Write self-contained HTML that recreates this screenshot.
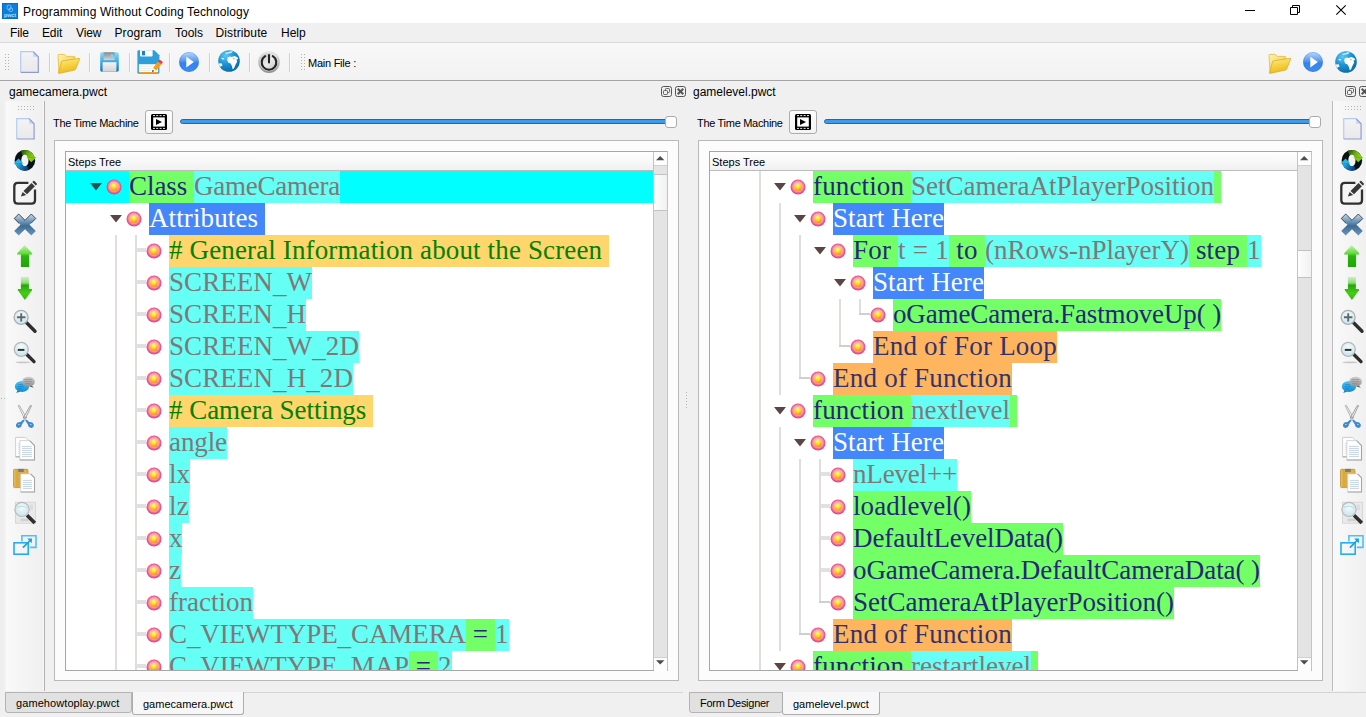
<!DOCTYPE html>
<html><head><meta charset="utf-8"><title>PWCT</title><style>
html,body{margin:0;padding:0}
body{width:1366px;height:717px;overflow:hidden;background:#f0f0f0;position:relative;font-family:"Liberation Sans",sans-serif;font-size:12px;color:#000}
.a{position:absolute}
.t{position:absolute;white-space:pre;line-height:16px;height:16px}
svg{position:absolute;overflow:visible}
.tree{position:absolute;background:#fff;overflow:hidden}
.row{position:absolute;left:0;height:32px;white-space:pre;font-family:"Liberation Serif",serif;font-size:27px;line-height:32px}
.row span{position:absolute;top:0;height:32px;display:block}
.row span i{font-style:normal;position:absolute;left:0;top:-1px;line-height:32px}
.row u{text-decoration:none;position:relative;top:1.5px}
.g{background:#73ff66;color:#27277a}
.c{background:#66fff5;color:#807878}
.b{background:#4487fa;color:#fff}
.y{background:#ffd66b;color:#008000}
.o{background:#ffb55e;color:#33336b}
.vl{position:absolute;width:2px;background:#e0dedb}
.hl{position:absolute;height:2px;background:#d2cfcb}
.hs{position:absolute;height:4px;background:#e2e1e0}
.dot{position:absolute;width:1px;height:1px;background:#b2b2b2}
</style></head><body>

<svg width="0" height="0" style="position:absolute">
<defs>
<radialGradient id="gBallO" cx="50%" cy="47%" r="52%"><stop offset="0" stop-color="#fbc0d2"/><stop offset="0.5" stop-color="#fab8cc"/><stop offset="0.68" stop-color="#f48aab"/><stop offset="0.85" stop-color="#ee5583"/><stop offset="1" stop-color="#eb4074"/></radialGradient>
<radialGradient id="gBallI" cx="45%" cy="30%" r="72%"><stop offset="0" stop-color="#fffbc0"/><stop offset="0.35" stop-color="#ffe040"/><stop offset="0.7" stop-color="#ffb818"/><stop offset="1" stop-color="#f28a00"/></radialGradient>
<symbol id="ball" viewBox="0 0 16 16"><circle cx="8" cy="8" r="7.5" fill="url(#gBallO)"/><circle cx="8" cy="7.9" r="3.9" fill="url(#gBallI)"/></symbol>

<linearGradient id="gDoc" x1="0" y1="0" x2="0" y2="1"><stop offset="0" stop-color="#f3f3f5"/><stop offset="1" stop-color="#e9e9ea"/></linearGradient>
<symbol id="doc" viewBox="0 0 19 22" overflow="visible"><path d="M0.7 0.7H13.2L18.3 5.8V21.3H0.7Z" fill="url(#gDoc)"/><path d="M13.2 0.7V5.8H18.3Z" fill="#c5d6f7"/><path d="M0.7 21.3V0.7H13.2" fill="none" stroke="#b5cbee" stroke-width="1.2"/><path d="M13.2 0.7L18.3 5.8V21.3H0.7" fill="none" stroke="#8f9ad4" stroke-width="1.2"/></symbol>

<linearGradient id="gFoB" x1="0" y1="0" x2="1" y2="1"><stop offset="0" stop-color="#fdf3a8"/><stop offset="1" stop-color="#f0c63a"/></linearGradient>
<linearGradient id="gFoF" x1="0" y1="0" x2="0.3" y2="1"><stop offset="0" stop-color="#fdeb9a"/><stop offset="0.5" stop-color="#f7d448"/><stop offset="1" stop-color="#ecbb1c"/></linearGradient>
<symbol id="folder" viewBox="0 0 23 20" overflow="visible"><path d="M1 1.2Q1 0.4 1.8 0.4H6.8Q7.6 0.4 8.2 1.1L9.4 2.4H17Q17.8 2.4 17.8 3.2V5.5L5 8L2 18.8Z" fill="url(#gFoB)" stroke="#e0b52c" stroke-width="0.7"/><path d="M4.6 7.6Q4.8 6.9 5.6 6.8L22.2 4.3Q23 4.2 22.7 5L18.6 15.2Q18.3 15.9 17.5 16.1L2.2 19.4Q1.3 19.5 1.5 18.7Z" fill="url(#gFoF)" stroke="#dba91a" stroke-width="0.7"/></symbol>

<linearGradient id="gSvB" x1="0" y1="0" x2="0" y2="1"><stop offset="0" stop-color="#8fdcf8"/><stop offset="0.45" stop-color="#45aee6"/><stop offset="1" stop-color="#1472bd"/></linearGradient>
<linearGradient id="gSvS" x1="0" y1="0" x2="0" y2="1"><stop offset="0" stop-color="#8a8a8a"/><stop offset="1" stop-color="#d6d6d6"/></linearGradient>
<linearGradient id="gSvL" x1="0" y1="0" x2="0" y2="1"><stop offset="0" stop-color="#f4f4f4"/><stop offset="1" stop-color="#d2d2d2"/></linearGradient>
<symbol id="save" viewBox="0 0 19 20" overflow="visible"><rect x="0.2" y="0.3" width="18.6" height="19.4" rx="1.6" fill="url(#gSvB)"/><rect x="3.6" y="0.3" width="11" height="7.8" fill="url(#gSvS)"/><rect x="10.8" y="2.2" width="2.2" height="4.6" fill="#7fd4f5"/><rect x="2.6" y="10.2" width="13.8" height="9.5" fill="url(#gSvL)"/></symbol>

<symbol id="saveas" viewBox="0 0 24 24" overflow="visible"><path d="M1.8 0.2H17.4L22.4 5.2V22.4Q22.4 23.8 21 23.8H1.8Q0.4 23.8 0.4 22.4V1.6Q0.4 0.2 1.8 0.2Z" fill="#2d9fda"/><path d="M3 0.2H15.6V5.2Q15.6 6.4 14.4 6.4H4.2Q3 6.4 3 5.2Z" fill="#fff"/><rect x="5" y="1" width="3" height="4.4" fill="#1c82bd"/><rect x="1.9" y="14.2" width="19.2" height="7.8" fill="#fff"/><path d="M3.5 16.2H16M3.5 18.4H15M3.5 20.4H14" stroke="#dedede" stroke-width="0.7"/><rect x="1.9" y="22" width="19.2" height="1.2" fill="#e9a225"/><path d="M15.3 21.8L16 18L20.8 11.6L24.2 14.2L19.4 20.6Z" fill="#ff9c14"/><path d="M15.3 21.8L16 18L19.4 20.6Z" fill="#fff"/><path d="M20.8 11.6L22 10Q22.5 9.4 23.2 9.9L25.4 11.6Q26 12.1 25.5 12.7L24.2 14.2Z" fill="#ee3a4c"/><path d="M15.2 21.9L15.6 19.9L17.2 21.1Z" fill="#111"/></symbol>

<linearGradient id="gPl" x1="0" y1="0" x2="0" y2="1"><stop offset="0" stop-color="#b9d7fb"/><stop offset="0.42" stop-color="#5c9df2"/><stop offset="0.55" stop-color="#3482ee"/><stop offset="1" stop-color="#3d8cf2"/></linearGradient>
<symbol id="play" viewBox="0 0 20 20" overflow="visible"><circle cx="10" cy="10" r="9.9" fill="url(#gPl)"/><circle cx="10" cy="10" r="9.6" fill="none" stroke="#2a6fd6" stroke-width="0.5" opacity="0.6"/><path d="M7.3 4.8V15.4L14.9 10.1Z" fill="#fff"/></symbol>

<radialGradient id="gGl" cx="35%" cy="25%" r="80%"><stop offset="0" stop-color="#5cc8f6"/><stop offset="0.5" stop-color="#1c94d4"/><stop offset="1" stop-color="#0a68a6"/></radialGradient>
<symbol id="globe" viewBox="0 0 22 22" overflow="visible"><circle cx="11" cy="11" r="10.8" fill="url(#gGl)"/><path d="M9.6 7.6L11.8 6.4L13.8 7L16.4 6L19.4 7.2L20.2 9L18.4 9.4L19.2 11.6L17.6 14.4L16.2 18L14.8 19.6L13.9 16L12.6 13.4L10.2 12.6L9.2 10Z" fill="#fff"/><path d="M14.6 8.4L16.6 8.2L16.2 9.4Z" fill="#2a9cd8"/><path d="M3.2 7.8L5.8 8.2L6.4 9.4L4 9.2Z" fill="#fff" opacity="0.9"/><path d="M7 2.8L10 2.2L12.5 1.2L15 1.6L13.5 3L10.5 3.4L8 4Z" fill="#e8f6fd" opacity="0.85"/><path d="M0.2 13.5L3.6 13.2L4.6 15.4L2 16.8Z" fill="#f5f5f5"/></symbol>

<linearGradient id="gPw" x1="0" y1="0" x2="0" y2="1"><stop offset="0" stop-color="#e9e9e9"/><stop offset="0.5" stop-color="#c4c4c4"/><stop offset="1" stop-color="#8e8e8e"/></linearGradient>
<linearGradient id="gPw2" x1="0" y1="0" x2="1" y2="1"><stop offset="0" stop-color="#bdbdbd"/><stop offset="0.5" stop-color="#ececec"/><stop offset="1" stop-color="#b5b5b5"/></linearGradient>
<symbol id="power" viewBox="0 0 22 22" overflow="visible"><circle cx="11" cy="11" r="10.9" fill="url(#gPw)"/><circle cx="11" cy="11" r="9.2" fill="url(#gPw2)"/><path d="M7.2 5.2A7.3 7.3 0 1 0 14.8 5.2" fill="none" stroke="#232323" stroke-width="2.1" stroke-linecap="round"/><path d="M11 4V11.4" stroke="#232323" stroke-width="2.1" stroke-linecap="round"/></symbol>

<!-- sidebar icons: 48x32 boxes -->
<symbol id="sdoc" viewBox="0 0 48 32" overflow="visible"><use href="#doc" x="16" y="5" width="18.8" height="21.7"/></symbol>

<linearGradient id="gRfG" gradientUnits="userSpaceOnUse" x1="19" y1="4" x2="34" y2="12"><stop offset="0" stop-color="#0d1a08"/><stop offset="0.25" stop-color="#2f6206"/><stop offset="0.6" stop-color="#68ae0c"/><stop offset="1" stop-color="#8cd216"/></linearGradient>
<linearGradient id="gRfB" gradientUnits="userSpaceOnUse" x1="31" y1="27" x2="16" y2="19"><stop offset="0" stop-color="#06142c"/><stop offset="0.25" stop-color="#093f78"/><stop offset="0.6" stop-color="#0e74b6"/><stop offset="1" stop-color="#2cb6e4"/></linearGradient>
<symbol id="refresh" viewBox="0 0 48 32" overflow="visible"><clipPath id="cpRf"><path clip-rule="evenodd" d="M14.6 15.4A10.3 10.3 0 1 0 35.2 15.4A10.3 10.3 0 1 0 14.6 15.4Z M21.3 15.4A3.6 6.2 0 1 1 28.5 15.4A3.6 6.2 0 1 1 21.3 15.4Z"/></clipPath><path fill-rule="evenodd" d="M14.6 15.4A10.3 10.3 0 1 0 35.2 15.4A10.3 10.3 0 1 0 14.6 15.4Z M21.3 15.4A3.6 6.2 0 1 1 28.5 15.4A3.6 6.2 0 1 1 21.3 15.4Z" fill="#0a1114"/><g clip-path="url(#cpRf)"><path d="M24.9 15.4L19 2H40V12.6H24.9Z" fill="url(#gRfG)"/><path d="M24.9 15.4L30.8 29H10V18.2H24.9Z" fill="url(#gRfB)"/></g><path d="M26.4 12.3H36.5L31.2 17.2Z" fill="#80c814"/><path d="M23.4 18.4H13.4L18.6 13.4Z" fill="#2bb4e4"/></symbol>

<symbol id="edit" viewBox="0 0 48 32" overflow="visible"><path d="M28.4 5.9H17.8Q14.3 5.9 14.3 9.4V23.2Q14.3 26.7 17.8 26.7H31.5Q35 26.7 35 23.2V12.6" fill="none" stroke="#303030" stroke-width="2.3"/><path d="M20.9 19.6L22.6 14.9L26.2 18.1Z" fill="#383838"/><path d="M23.5 13.9L31.5 5.9L34.9 9.2L27 17.2Z" fill="#383838"/><path d="M32.3 5.1L33.3 4.1Q33.8 3.6 34.4 4.1L36.8 6.5Q37.3 7 36.8 7.6L35.8 8.5Z" fill="#383838"/></symbol>

<linearGradient id="gX" x1="0" y1="0" x2="0" y2="1"><stop offset="0" stop-color="#c9dbe9"/><stop offset="0.3" stop-color="#7a9fbe"/><stop offset="0.55" stop-color="#3f6c92"/><stop offset="1" stop-color="#6a97bd"/></linearGradient>
<symbol id="xdel" viewBox="0 0 48 32" overflow="visible"><path d="M18.7 5L25 11.3L31.3 5L35.8 9.5L29.5 15.8L35.8 22.1L31.3 26.6L25 20.3L18.7 26.6L14.2 22.1L20.5 15.8L14.2 9.5Z" fill="url(#gX)"/><path d="M14.2 9.5L18.7 5L25 11.3L31.3 5L35.8 9.5L31 14.3" fill="none" stroke="#15222e" stroke-width="0.9" opacity="0.85"/><path d="M14.2 9.5L19 14.3" fill="none" stroke="#15222e" stroke-width="0.9" opacity="0.85"/></symbol>

<linearGradient id="gUp" x1="0" y1="0" x2="0" y2="1"><stop offset="0" stop-color="#c8f3b4"/><stop offset="0.38" stop-color="#62dc3a"/><stop offset="0.5" stop-color="#2cb410"/><stop offset="1" stop-color="#1fa507"/></linearGradient>
<symbol id="up" viewBox="0 0 48 32" overflow="visible"><path d="M24.7 4L32.2 12.2V13.6H29.1V26.1H20.9V13.6H17.2V12.2Z" fill="url(#gUp)"/></symbol>
<linearGradient id="gDn" x1="0" y1="0" x2="0" y2="1"><stop offset="0" stop-color="#c9efbd"/><stop offset="0.25" stop-color="#8fdc78"/><stop offset="0.36" stop-color="#27a60a"/><stop offset="0.7" stop-color="#44cc18"/><stop offset="1" stop-color="#35b80e"/></linearGradient>
<symbol id="down" viewBox="0 0 48 32" overflow="visible"><path d="M20.9 4.1H28.9V16H32V17.3L24.9 27L17.8 17.3V16H20.9Z" fill="url(#gDn)"/></symbol>

<radialGradient id="gLens" cx="50%" cy="35%" r="70%"><stop offset="0" stop-color="#f6fbfc"/><stop offset="1" stop-color="#c4e2e8"/></radialGradient>
<symbol id="zin" viewBox="0 0 48 32" overflow="visible"><path d="M26.6 17.8L35 26.2" stroke="#2e2e2e" stroke-width="3.4" stroke-linecap="round"/><circle cx="21.1" cy="12.3" r="7" fill="url(#gLens)" stroke="#a9adb0" stroke-width="1.3"/><path d="M17 12.3H25.4M21.2 8.2V16.5" stroke="#5d686e" stroke-width="1.9"/></symbol>
<symbol id="zout" viewBox="0 0 48 32" overflow="visible"><ellipse cx="23" cy="25.4" rx="7.4" ry="0.9" fill="#bdbdbd" opacity="0.8"/><path d="M26.4 17L34 24.6" stroke="#2e2e2e" stroke-width="3.4" stroke-linecap="round"/><circle cx="21.3" cy="12.3" r="7" fill="url(#gLens)" stroke="#b4b8bb" stroke-width="1.3"/><path d="M17.8 12.9H24.4" stroke="#2a3538" stroke-width="2"/></symbol>

<linearGradient id="gCmB" x1="0" y1="0" x2="0" y2="1"><stop offset="0" stop-color="#4cc4f5"/><stop offset="1" stop-color="#148ad2"/></linearGradient>
<linearGradient id="gCmG" x1="0" y1="0" x2="0" y2="1"><stop offset="0" stop-color="#cfcfcf"/><stop offset="1" stop-color="#8f8f8f"/></linearGradient>
<symbol id="comment" viewBox="0 0 48 32" overflow="visible"><path d="M17.8 21L16.2 24L20.5 22.4Z" fill="#1480c4"/><ellipse cx="22" cy="17.4" rx="7.1" ry="5.5" fill="url(#gCmB)"/><path d="M18.2 15.6H23M17.8 17.6H24M18.2 19.6H21.5" stroke="#0f7cc0" stroke-width="0.8" opacity="0.7"/><path d="M31.6 16.4L33.9 18.8L29.5 17.6Z" fill="#555"/><ellipse cx="28.5" cy="12.8" rx="6.3" ry="5" fill="url(#gCmG)"/><path d="M24.6 10.6H32M24.2 12.6H32.2M25 14.6H30.5" stroke="#858585" stroke-width="0.8" opacity="0.8"/></symbol>

<symbol id="scissors" viewBox="0 0 48 32" overflow="visible"><path d="M18.2 4.6L19.4 4.4L26.4 16.8L24.6 17.8Z" fill="#f4f4f4" stroke="#9a9a9a" stroke-width="0.7"/><path d="M31.6 4.6L30.4 4.4L23.4 16.8L25.2 17.8Z" fill="#f4f4f4" stroke="#8c8c8c" stroke-width="0.8"/><circle cx="24.9" cy="17" r="1.1" fill="#e8e8e8" stroke="#777" stroke-width="0.6"/><path d="M23.9 18.6Q21.8 19.4 20.6 21Q17.2 20.6 16.1 23.2Q15.4 26.2 18.4 26.9Q21.4 27 21.9 23.6Q23.2 21.2 24.6 19.4Z" fill="#3f8bcf"/><path d="M25.9 18.6Q28 19.4 29.2 21Q32.6 20.6 33.7 23.2Q34.4 26.2 31.4 26.9Q28.4 27 27.9 23.6Q26.6 21.2 25.2 19.4Z" fill="#3f8bcf"/><ellipse cx="18.9" cy="23.6" rx="0.7" ry="0.5" fill="#d6e6f6"/><ellipse cx="30.9" cy="23.6" rx="0.7" ry="0.5" fill="#d6e6f6"/></symbol>

<symbol id="copy" viewBox="0 0 48 32" overflow="visible"><path d="M15.6 4.4H25.6L29.4 8.2V23.6H15.6Z" fill="#fdfdfd" stroke="#c4c4c4" stroke-width="0.8"/><path d="M15.6 23.9H29.4" stroke="#a8a8a8" stroke-width="1"/><path d="M18 10.4H20M18 12.4H20M18 14.4H20M18 16.4H20M18 18.4H20M18 20.4H20" stroke="#cfd6e0" stroke-width="0.7"/><path d="M19.8 7.6H29.6L34.5 12.5V27H19.8Z" fill="#fff" stroke="#c9c9c9" stroke-width="0.8"/><path d="M29.6 7.6L34.5 12.5V27H19.8" fill="none" stroke="#a4a4a4" stroke-width="1.1"/><path d="M22 13.4H31.8M22 15.4H32M22 17.4H32M22 19.4H32M22 21.4H32M22 23.4H32" stroke="#b9c8dc" stroke-width="0.8"/></symbol>

<linearGradient id="gPs" x1="0" y1="0" x2="1" y2="0"><stop offset="0" stop-color="#e6c463"/><stop offset="0.2" stop-color="#d9a941"/><stop offset="1" stop-color="#e2b54c"/></linearGradient>
<symbol id="paste" viewBox="0 0 48 32" overflow="visible"><rect x="13.5" y="4.3" width="14.5" height="18.3" rx="1" fill="url(#gPs)" stroke="#b98a24" stroke-width="0.7"/><rect x="18.2" y="3.9" width="5.6" height="3" fill="#727a82"/><path d="M20.7 8.9H30.6L34.5 12.8V27H20.7Z" fill="#fff" stroke="#cdcdcd" stroke-width="0.7"/><path d="M30.6 8.9L34.5 12.8V27H20.7" fill="none" stroke="#a6a6a6" stroke-width="1.1"/><path d="M23 15.4H32M23 17.4H32M23 19.4H32M23 21.4H32M23 23.4H32" stroke="#b9c8dc" stroke-width="0.8"/></symbol>

<symbol id="find" viewBox="0 0 48 32" overflow="visible"><rect x="15.6" y="5.2" width="20" height="21" fill="#e9e9e9" stroke="#d2d2d2" stroke-width="0.8"/><rect x="20.5" y="21.6" width="8.5" height="2.6" fill="#d0d0d0"/><rect x="29.5" y="7.6" width="3.4" height="5.5" fill="#dcdcdc"/><path d="M27 18.2L34.8 26" stroke="#2e2e2e" stroke-width="3.6" stroke-linecap="butt"/><circle cx="22" cy="12.4" r="7.1" fill="url(#gLens)" stroke="#b6babd" stroke-width="1.2"/><path d="M16.5 10.6Q22 8 27.6 10.8" stroke="#bfe0ea" stroke-width="1.4" fill="none"/></symbol>

<symbol id="popup" viewBox="0 0 48 32" overflow="visible"><path d="M21.9 12.4V6.8H36V18.4H29.8" fill="none" stroke="#4fc0f6" stroke-width="1.6"/><rect x="14" y="13.8" width="14.2" height="11.4" fill="none" stroke="#24adf2" stroke-width="1.6"/><path d="M23.4 18.2L30.6 11" stroke="#12a2f0" stroke-width="1.7" stroke-linecap="round"/><path d="M27.2 9.6L32 9.4L31.8 14.2Z" fill="#12a2f0"/></symbol>

<symbol id="film" viewBox="0 0 16 16"><rect x="0" y="0" width="16" height="16" rx="1.5" fill="#000"/><rect x="2.2" y="3.4" width="11.6" height="9.2" fill="#fff"/><path d="M2 1.6H4M5.2 1.6H7.2M8.6 1.6H10.6M12 1.6H14M2 14.4H4M5.2 14.4H7.2M8.6 14.4H10.6M12 14.4H14" stroke="#fff" stroke-width="0.9"/><path d="M5 5V11L11 8Z" fill="#000"/></symbol>

<symbol id="appicon" viewBox="0 0 16 16"><rect x="0" y="0" width="16" height="16" fill="#0b7fdb"/><rect x="0.3" y="0.3" width="15.4" height="15.4" fill="none" stroke="#0565bd" stroke-width="0.6"/><rect x="5.2" y="2.2" width="3.6" height="4.2" rx="0.8" fill="none" stroke="#8fc8f4" stroke-width="0.7"/><rect x="7" y="5" width="3.6" height="3.4" rx="1.2" fill="none" stroke="#a9d5f7" stroke-width="0.7"/><text x="8" y="13.6" font-family="Liberation Sans, sans-serif" font-size="5.6" font-weight="bold" fill="#b9dcf8" text-anchor="middle" textLength="12" lengthAdjust="spacingAndGlyphs">pwct</text></symbol>
</defs>
</svg>

<div class="a" style="left:0;top:0;width:1366px;height:23px;background:#fff"></div>
<svg style="left:2px;top:3px" width="16" height="16"><use href="#appicon" width="16" height="16"/></svg>
<div class="t" style="left:23px;top:4px;font-size:12px;letter-spacing:0.13px">Programming Without Coding Technology</div>
<svg style="left:1240px;top:0" width="126" height="23"><path d="M5 10.5H15" stroke="#000" stroke-width="1"/><path d="M50.5 7.5H57.5V14.5H50.5Z M52.5 7.5V5.5H59.5V12.5H57.5" fill="none" stroke="#000" stroke-width="1"/><path d="M96.3 5.3L105.7 14.7M105.7 5.3L96.3 14.7" stroke="#000" stroke-width="1.1"/></svg>
<div class="a" style="left:0;top:23px;width:1366px;height:19px;background:#f0f0f0"></div>
<div class="a" style="left:0;top:42px;width:1366px;height:1px;background:#d9d9d9"></div>
<div class="t" style="left:10px;top:25px;font-size:12px;letter-spacing:-0.15px">File</div>
<div class="t" style="left:42px;top:25px;font-size:12px;letter-spacing:-0.15px">Edit</div>
<div class="t" style="left:76px;top:25px;font-size:12px;letter-spacing:-0.15px">View</div>
<div class="t" style="left:114.5px;top:25px;font-size:12px;letter-spacing:0.12px">Program</div>
<div class="t" style="left:175px;top:25px;font-size:12px;letter-spacing:0px">Tools</div>
<div class="t" style="left:215.5px;top:25px;font-size:12px;letter-spacing:0.12px">Distribute</div>
<div class="t" style="left:281px;top:25px;font-size:12px;letter-spacing:0px">Help</div>
<div class="a" style="left:0;top:43px;width:1366px;height:37px;background:linear-gradient(#f8f8f8,#f2f2f2)"></div>
<div class="a" style="left:0;top:80px;width:1366px;height:1px;background:#a5a5a5"></div>
<div class="a" style="left:49px;top:53px;width:1px;height:19px;background:#d0d0d0"></div><div class="a" style="left:50px;top:53px;width:1px;height:19px;background:#fbfbfb"></div>
<div class="a" style="left:89px;top:53px;width:1px;height:19px;background:#d0d0d0"></div><div class="a" style="left:90px;top:53px;width:1px;height:19px;background:#fbfbfb"></div>
<div class="a" style="left:129px;top:53px;width:1px;height:19px;background:#d0d0d0"></div><div class="a" style="left:130px;top:53px;width:1px;height:19px;background:#fbfbfb"></div>
<div class="a" style="left:169px;top:53px;width:1px;height:19px;background:#d0d0d0"></div><div class="a" style="left:170px;top:53px;width:1px;height:19px;background:#fbfbfb"></div>
<div class="a" style="left:209px;top:53px;width:1px;height:19px;background:#d0d0d0"></div><div class="a" style="left:210px;top:53px;width:1px;height:19px;background:#fbfbfb"></div>
<div class="a" style="left:249px;top:53px;width:1px;height:19px;background:#d0d0d0"></div><div class="a" style="left:250px;top:53px;width:1px;height:19px;background:#fbfbfb"></div>
<div class="a" style="left:289px;top:53px;width:1px;height:19px;background:#d0d0d0"></div><div class="a" style="left:290px;top:53px;width:1px;height:19px;background:#fbfbfb"></div>
<div class="dot" style="left:5px;top:54px"></div><div class="dot" style="left:5px;top:57px"></div><div class="dot" style="left:5px;top:60px"></div><div class="dot" style="left:5px;top:63px"></div><div class="dot" style="left:5px;top:66px"></div><div class="dot" style="left:5px;top:69px"></div><div class="dot" style="left:8px;top:54px"></div><div class="dot" style="left:8px;top:57px"></div><div class="dot" style="left:8px;top:60px"></div><div class="dot" style="left:8px;top:63px"></div><div class="dot" style="left:8px;top:66px"></div><div class="dot" style="left:8px;top:69px"></div>
<div class="dot" style="left:301px;top:54px"></div><div class="dot" style="left:301px;top:57px"></div><div class="dot" style="left:301px;top:60px"></div><div class="dot" style="left:301px;top:63px"></div><div class="dot" style="left:301px;top:66px"></div><div class="dot" style="left:301px;top:69px"></div><div class="dot" style="left:304px;top:54px"></div><div class="dot" style="left:304px;top:57px"></div><div class="dot" style="left:304px;top:60px"></div><div class="dot" style="left:304px;top:63px"></div><div class="dot" style="left:304px;top:66px"></div><div class="dot" style="left:304px;top:69px"></div>
<svg style="left:20px;top:51px" width="19" height="22"><use href="#doc" width="19" height="22"/></svg>
<svg style="left:57px;top:54px" width="23" height="20"><use href="#folder" width="23" height="20"/></svg>
<svg style="left:99.5px;top:52px" width="19" height="20"><use href="#save" width="19" height="20"/></svg>
<svg style="left:137px;top:50px" width="24" height="24"><use href="#saveas" width="24" height="24"/></svg>
<svg style="left:179.3px;top:52px" width="20" height="20"><use href="#play" width="20" height="20"/></svg>
<svg style="left:218px;top:50px" width="22" height="22"><use href="#globe" width="22" height="22"/></svg>
<svg style="left:258px;top:51px" width="22" height="22"><use href="#power" width="22" height="22"/></svg>
<div class="t" style="left:308px;top:55px;font-size:11px;letter-spacing:-0.25px">Main File :</div>
<svg style="left:1268.2px;top:54px" width="23" height="20"><use href="#folder" width="23" height="20"/></svg>
<svg style="left:1303px;top:52px" width="20" height="20"><use href="#play" width="20" height="20"/></svg>
<svg style="left:1335px;top:50.5px" width="22" height="22"><use href="#globe" width="22" height="22"/></svg>
<div class="t" style="left:9px;top:84px;font-size:12px">gamecamera.pwct</div>
<div class="t" style="left:53px;top:115px;font-size:11px;letter-spacing:-0.3px">The Time Machine</div>
<div class="a" style="left:145px;top:110px;width:26px;height:22px;border:1px solid #adadad;border-radius:3px;background:linear-gradient(#fdfdfd,#f3f3f3)"></div>
<svg style="left:151px;top:114px" width="16" height="16"><use href="#film" width="16" height="16"/></svg>
<div class="a" style="left:180px;top:119px;width:492px;height:3px;border:1px solid #2567a6;border-radius:3px;background:#3d9be9"></div>
<div class="a" style="left:665px;top:116px;width:10px;height:10px;border:1px solid #acacac;border-radius:3px;background:#fdfdfd"></div>
<div class="a" style="left:54px;top:140px;width:625px;height:541px;border:1px solid #b9b9b9;background:#fcfcfc;box-sizing:border-box"></div>
<div class="a" style="left:65px;top:151px;width:603px;height:520px;border:1px solid #a6a6a6;border-right-color:#c4c4c4;background:#fff;box-sizing:border-box"></div>
<div class="a" style="left:66px;top:152px;width:588px;height:18px;background:linear-gradient(#fff,#f1f1f1);border-bottom:1px solid #bcbcbc"></div>
<div class="t" style="left:68px;top:154px;font-size:11px">Steps Tree</div>
<div class="t" style="left:693px;top:84px;font-size:12px">gamelevel.pwct</div>
<div class="t" style="left:697px;top:115px;font-size:11px;letter-spacing:-0.3px">The Time Machine</div>
<div class="a" style="left:789px;top:110px;width:26px;height:22px;border:1px solid #adadad;border-radius:3px;background:linear-gradient(#fdfdfd,#f3f3f3)"></div>
<svg style="left:795px;top:114px" width="16" height="16"><use href="#film" width="16" height="16"/></svg>
<div class="a" style="left:824px;top:119px;width:492px;height:3px;border:1px solid #2567a6;border-radius:3px;background:#3d9be9"></div>
<div class="a" style="left:1309px;top:116px;width:10px;height:10px;border:1px solid #acacac;border-radius:3px;background:#fdfdfd"></div>
<div class="a" style="left:698px;top:140px;width:625px;height:541px;border:1px solid #b9b9b9;background:#fcfcfc;box-sizing:border-box"></div>
<div class="a" style="left:709px;top:151px;width:603px;height:520px;border:1px solid #a6a6a6;border-right-color:#c4c4c4;background:#fff;box-sizing:border-box"></div>
<div class="a" style="left:710px;top:152px;width:588px;height:18px;background:linear-gradient(#fff,#f1f1f1);border-bottom:1px solid #bcbcbc"></div>
<div class="t" style="left:712px;top:154px;font-size:11px">Steps Tree</div>
<svg style="left:661px;top:86px" width="26" height="11"><rect x="0.5" y="0.5" width="10" height="10" rx="2" fill="none" stroke="#555" stroke-width="1"/><rect x="4.5" y="2.5" width="4" height="4" rx="0.8" fill="none" stroke="#555" stroke-width="0.9"/><rect x="2.5" y="4.5" width="4" height="4" rx="0.8" fill="#f0f0f0" stroke="#555" stroke-width="0.9"/><rect x="14.5" y="0.5" width="10" height="10" rx="2" fill="none" stroke="#555" stroke-width="1"/><path d="M16.7 2.7L22.3 8.3M22.3 2.7L16.7 8.3" stroke="#555" stroke-width="2"/></svg>
<svg style="left:1345px;top:86px" width="26" height="11"><rect x="0.5" y="0.5" width="10" height="10" rx="2" fill="none" stroke="#555" stroke-width="1"/><rect x="4.5" y="2.5" width="4" height="4" rx="0.8" fill="none" stroke="#555" stroke-width="0.9"/><rect x="2.5" y="4.5" width="4" height="4" rx="0.8" fill="#f0f0f0" stroke="#555" stroke-width="0.9"/><rect x="14.5" y="0.5" width="10" height="10" rx="2" fill="none" stroke="#555" stroke-width="1"/><path d="M16.7 2.7L22.3 8.3M22.3 2.7L16.7 8.3" stroke="#555" stroke-width="2"/></svg>
<div class="a" style="left:653px;top:152px;width:13px;height:518px;background:#e4e4e4;border-left:1px solid #c4c4c4"></div>
<div class="a" style="left:654px;top:152px;width:13px;height:13px;background:#fdfdfd;border-bottom:1px solid #d0d0d0"></div>
<div class="a" style="left:654px;top:657px;width:13px;height:13px;background:#fdfdfd;border-top:1px solid #d0d0d0"></div>
<svg style="left:656.2px;top:156.2px" width="8.4" height="4.4"><path d="M0 4.2L4.2 0L8.4 4.2Z" fill="#4d4d4d"/></svg>
<svg style="left:656.2px;top:660.4px" width="8.4" height="4.4"><path d="M0 0.2L4.2 4.4L8.4 0.2Z" fill="#4d4d4d"/></svg>
<div class="a" style="left:654px;top:174px;width:13px;height:35px;background:linear-gradient(90deg,#fdfdfd,#f1f1f1);border-top:1px solid #c2c2c2;border-bottom:1px solid #c2c2c2"></div>
<div class="a" style="left:1297px;top:152px;width:13px;height:518px;background:#e4e4e4;border-left:1px solid #c4c4c4"></div>
<div class="a" style="left:1298px;top:152px;width:13px;height:13px;background:#fdfdfd;border-bottom:1px solid #d0d0d0"></div>
<div class="a" style="left:1298px;top:657px;width:13px;height:13px;background:#fdfdfd;border-top:1px solid #d0d0d0"></div>
<svg style="left:1300.2px;top:156.2px" width="8.4" height="4.4"><path d="M0 4.2L4.2 0L8.4 4.2Z" fill="#4d4d4d"/></svg>
<svg style="left:1300.2px;top:660.4px" width="8.4" height="4.4"><path d="M0 0.2L4.2 4.4L8.4 0.2Z" fill="#4d4d4d"/></svg>
<div class="a" style="left:1298px;top:250px;width:13px;height:26px;background:linear-gradient(90deg,#fdfdfd,#f1f1f1);border-top:1px solid #c2c2c2;border-bottom:1px solid #c2c2c2"></div>
<div class="a" style="left:0px;top:101px;width:44px;height:590px;background:linear-gradient(90deg,#eeeeee 0,#efefef 4px,#f9f9f9 6.5px,#f5f5f5 20px,#f0f0f0 42px,#f8f8f8 44px)"></div>
<div class="a" style="left:44px;top:101px;width:1px;height:590px;background:#b2b2b2"></div>
<div class="a" style="left:1333px;top:101px;width:33px;height:590px;background:linear-gradient(90deg,#f9f9f9,#f0f0f0)"></div>
<div class="a" style="left:1332px;top:101px;width:1px;height:590px;background:#bdbdbd"></div>
<div class="dot" style="left:18px;top:106px"></div><div class="dot" style="left:18px;top:109px"></div><div class="dot" style="left:21px;top:106px"></div><div class="dot" style="left:21px;top:109px"></div><div class="dot" style="left:24px;top:106px"></div><div class="dot" style="left:24px;top:109px"></div><div class="dot" style="left:27px;top:106px"></div><div class="dot" style="left:27px;top:109px"></div><div class="dot" style="left:30px;top:106px"></div><div class="dot" style="left:30px;top:109px"></div><div class="dot" style="left:33px;top:106px"></div><div class="dot" style="left:33px;top:109px"></div>
<svg style="left:0px;top:113px" width="48" height="32"><use href="#sdoc" width="48" height="32"/></svg>
<svg style="left:0px;top:145px" width="48" height="32"><use href="#refresh" width="48" height="32"/></svg>
<svg style="left:0px;top:177px" width="48" height="32"><use href="#edit" width="48" height="32"/></svg>
<svg style="left:0px;top:209px" width="48" height="32"><use href="#xdel" width="48" height="32"/></svg>
<svg style="left:0px;top:241px" width="48" height="32"><use href="#up" width="48" height="32"/></svg>
<svg style="left:0px;top:273px" width="48" height="32"><use href="#down" width="48" height="32"/></svg>
<svg style="left:0px;top:305px" width="48" height="32"><use href="#zin" width="48" height="32"/></svg>
<svg style="left:0px;top:337px" width="48" height="32"><use href="#zout" width="48" height="32"/></svg>
<svg style="left:0px;top:369px" width="48" height="32"><use href="#comment" width="48" height="32"/></svg>
<svg style="left:0px;top:401px" width="48" height="32"><use href="#scissors" width="48" height="32"/></svg>
<svg style="left:0px;top:433px" width="48" height="32"><use href="#copy" width="48" height="32"/></svg>
<svg style="left:0px;top:465px" width="48" height="32"><use href="#paste" width="48" height="32"/></svg>
<svg style="left:0px;top:497px" width="48" height="32"><use href="#find" width="48" height="32"/></svg>
<svg style="left:0px;top:529px" width="48" height="32"><use href="#popup" width="48" height="32"/></svg>
<div class="dot" style="left:1345px;top:106px"></div><div class="dot" style="left:1345px;top:109px"></div><div class="dot" style="left:1348px;top:106px"></div><div class="dot" style="left:1348px;top:109px"></div><div class="dot" style="left:1351px;top:106px"></div><div class="dot" style="left:1351px;top:109px"></div><div class="dot" style="left:1354px;top:106px"></div><div class="dot" style="left:1354px;top:109px"></div><div class="dot" style="left:1357px;top:106px"></div><div class="dot" style="left:1357px;top:109px"></div><div class="dot" style="left:1360px;top:106px"></div><div class="dot" style="left:1360px;top:109px"></div>
<svg style="left:1327px;top:113px" width="48" height="32"><use href="#sdoc" width="48" height="32"/></svg>
<svg style="left:1327px;top:145px" width="48" height="32"><use href="#refresh" width="48" height="32"/></svg>
<svg style="left:1327px;top:177px" width="48" height="32"><use href="#edit" width="48" height="32"/></svg>
<svg style="left:1327px;top:209px" width="48" height="32"><use href="#xdel" width="48" height="32"/></svg>
<svg style="left:1327px;top:241px" width="48" height="32"><use href="#up" width="48" height="32"/></svg>
<svg style="left:1327px;top:273px" width="48" height="32"><use href="#down" width="48" height="32"/></svg>
<svg style="left:1327px;top:305px" width="48" height="32"><use href="#zin" width="48" height="32"/></svg>
<svg style="left:1327px;top:337px" width="48" height="32"><use href="#zout" width="48" height="32"/></svg>
<svg style="left:1327px;top:369px" width="48" height="32"><use href="#comment" width="48" height="32"/></svg>
<svg style="left:1327px;top:401px" width="48" height="32"><use href="#scissors" width="48" height="32"/></svg>
<svg style="left:1327px;top:433px" width="48" height="32"><use href="#copy" width="48" height="32"/></svg>
<svg style="left:1327px;top:465px" width="48" height="32"><use href="#paste" width="48" height="32"/></svg>
<svg style="left:1327px;top:497px" width="48" height="32"><use href="#find" width="48" height="32"/></svg>
<svg style="left:1327px;top:529px" width="48" height="32"><use href="#popup" width="48" height="32"/></svg>
<div class="dot" style="left:686px;top:392px"></div><div class="dot" style="left:686px;top:395px"></div><div class="dot" style="left:686px;top:398px"></div><div class="dot" style="left:686px;top:401px"></div><div class="dot" style="left:686px;top:404px"></div><div class="dot" style="left:686px;top:407px"></div>
<div class="dot" style="left:1px;top:398px"></div><div class="dot" style="left:4px;top:398px"></div>
<div class="tree" style="left:66px;top:171px;width:587px;height:499px"><div class="a" style="left:0;top:0px;width:588px;height:32px;background:#00ffff"></div><svg style="left:24px;top:12px" width="12" height="8" viewBox="0 0 12 8"><path d="M0 0H12L6 7.6Z" fill="#2c5050"/></svg><svg style="left:40px;top:7.9px" width="16" height="16"><use href="#ball" width="16" height="16"/></svg><div class="row" style="top:0px"><span class="g" style="left:63px;width:65px"><i style="letter-spacing:-0.042px">Class </i></span><span class="c" style="left:128px;width:146px"><i style="letter-spacing:-0.242px">GameCamera</i></span></div><svg style="left:44px;top:44px" width="12" height="8" viewBox="0 0 12 8"><path d="M0 0H12L6 7.6Z" fill="#5b4545"/></svg><svg style="left:60px;top:39.9px" width="16" height="16"><use href="#ball" width="16" height="16"/></svg><div class="row" style="top:32px"><span class="b" style="left:83px;width:116px"><i style="letter-spacing:0.116px">Attributes </i></span></div><div class="vl" style="left:49px;top:64px;height:32px"></div><div class="vl" style="left:69px;top:64px;height:32px"></div><div class="hs" style="left:71px;top:77px;width:9px"></div><svg style="left:80px;top:71.9px" width="16" height="16"><use href="#ball" width="16" height="16"/></svg><div class="row" style="top:64px"><span class="y" style="left:103px;width:440px"><i style="letter-spacing:0.133px"># General Information about the Screen </i></span></div><div class="vl" style="left:49px;top:96px;height:32px"></div><div class="vl" style="left:69px;top:96px;height:32px"></div><div class="hs" style="left:71px;top:109px;width:9px"></div><svg style="left:80px;top:103.9px" width="16" height="16"><use href="#ball" width="16" height="16"/></svg><div class="row" style="top:96px"><span class="c" style="left:103px;width:143px"><i style="letter-spacing:0.059px">SCREEN<u>_</u>W</i></span></div><div class="vl" style="left:49px;top:128px;height:32px"></div><div class="vl" style="left:69px;top:128px;height:32px"></div><div class="hs" style="left:71px;top:141px;width:9px"></div><svg style="left:80px;top:135.9px" width="16" height="16"><use href="#ball" width="16" height="16"/></svg><div class="row" style="top:128px"><span class="c" style="left:103px;width:137px"><i style="letter-spacing:0.057px">SCREEN<u>_</u>H</i></span></div><div class="vl" style="left:49px;top:160px;height:32px"></div><div class="vl" style="left:69px;top:160px;height:32px"></div><div class="hs" style="left:71px;top:173px;width:9px"></div><svg style="left:80px;top:167.9px" width="16" height="16"><use href="#ball" width="16" height="16"/></svg><div class="row" style="top:160px"><span class="c" style="left:103px;width:190px"><i style="letter-spacing:0.088px">SCREEN<u>_</u>W<u>_</u>2D</i></span></div><div class="vl" style="left:49px;top:192px;height:32px"></div><div class="vl" style="left:69px;top:192px;height:32px"></div><div class="hs" style="left:71px;top:205px;width:9px"></div><svg style="left:80px;top:199.9px" width="16" height="16"><use href="#ball" width="16" height="16"/></svg><div class="row" style="top:192px"><span class="c" style="left:103px;width:184px"><i style="letter-spacing:0.087px">SCREEN<u>_</u>H<u>_</u>2D</i></span></div><div class="vl" style="left:49px;top:224px;height:32px"></div><div class="vl" style="left:69px;top:224px;height:32px"></div><div class="hs" style="left:71px;top:237px;width:9px"></div><svg style="left:80px;top:231.9px" width="16" height="16"><use href="#ball" width="16" height="16"/></svg><div class="row" style="top:224px"><span class="y" style="left:103px;width:204px"><i style="letter-spacing:-0.039px"># Camera Settings </i></span></div><div class="vl" style="left:49px;top:256px;height:32px"></div><div class="vl" style="left:69px;top:256px;height:32px"></div><div class="hs" style="left:71px;top:269px;width:9px"></div><svg style="left:80px;top:263.9px" width="16" height="16"><use href="#ball" width="16" height="16"/></svg><div class="row" style="top:256px"><span class="c" style="left:103px;width:58px"><i style="letter-spacing:-0.094px">angle</i></span></div><div class="vl" style="left:49px;top:288px;height:32px"></div><div class="vl" style="left:69px;top:288px;height:32px"></div><div class="hs" style="left:71px;top:301px;width:9px"></div><svg style="left:80px;top:295.9px" width="16" height="16"><use href="#ball" width="16" height="16"/></svg><div class="row" style="top:288px"><span class="c" style="left:103px;width:21px"><i style="letter-spacing:0.000px">lx</i></span></div><div class="vl" style="left:49px;top:320px;height:32px"></div><div class="vl" style="left:69px;top:320px;height:32px"></div><div class="hs" style="left:71px;top:333px;width:9px"></div><svg style="left:80px;top:327.9px" width="16" height="16"><use href="#ball" width="16" height="16"/></svg><div class="row" style="top:320px"><span class="c" style="left:103px;width:20px"><i style="letter-spacing:0.258px">lz</i></span></div><div class="vl" style="left:49px;top:352px;height:32px"></div><div class="vl" style="left:69px;top:352px;height:32px"></div><div class="hs" style="left:71px;top:365px;width:9px"></div><svg style="left:80px;top:359.9px" width="16" height="16"><use href="#ball" width="16" height="16"/></svg><div class="row" style="top:352px"><span class="c" style="left:103px;width:13px"><i style="letter-spacing:-0.500px">x</i></span></div><div class="vl" style="left:49px;top:384px;height:32px"></div><div class="vl" style="left:69px;top:384px;height:32px"></div><div class="hs" style="left:71px;top:397px;width:9px"></div><svg style="left:80px;top:391.9px" width="16" height="16"><use href="#ball" width="16" height="16"/></svg><div class="row" style="top:384px"><span class="c" style="left:103px;width:12px"><i style="letter-spacing:0.016px">z</i></span></div><div class="vl" style="left:49px;top:416px;height:32px"></div><div class="vl" style="left:69px;top:416px;height:32px"></div><div class="hs" style="left:71px;top:429px;width:9px"></div><svg style="left:80px;top:423.9px" width="16" height="16"><use href="#ball" width="16" height="16"/></svg><div class="row" style="top:416px"><span class="c" style="left:103px;width:84px"><i style="letter-spacing:0.008px">fraction</i></span></div><div class="vl" style="left:49px;top:448px;height:32px"></div><div class="vl" style="left:69px;top:448px;height:32px"></div><div class="hs" style="left:71px;top:461px;width:9px"></div><svg style="left:80px;top:455.9px" width="16" height="16"><use href="#ball" width="16" height="16"/></svg><div class="row" style="top:448px"><span class="c" style="left:103px;width:297px"><i style="letter-spacing:-0.090px">C<u>_</u>VIEWTYPE<u>_</u>CAMERA</i></span><span class="g" style="left:400px;width:29px"><i style="letter-spacing:0.089px"> = </i></span><span class="c" style="left:429px;width:14px"><i style="letter-spacing:0.500px">1</i></span></div><div class="vl" style="left:49px;top:480px;height:32px"></div><div class="vl" style="left:69px;top:480px;height:32px"></div><div class="hs" style="left:71px;top:493px;width:9px"></div><svg style="left:80px;top:487.9px" width="16" height="16"><use href="#ball" width="16" height="16"/></svg><div class="row" style="top:480px"><span class="c" style="left:103px;width:240px"><i style="letter-spacing:-0.108px">C<u>_</u>VIEWTYPE<u>_</u>MAP</i></span><span class="g" style="left:343px;width:29px"><i style="letter-spacing:0.089px"> = </i></span><span class="c" style="left:372px;width:14px"><i style="letter-spacing:0.500px">2</i></span></div></div>
<div class="tree" style="left:710px;top:171px;width:587px;height:499px"><div class="vl" style="left:49px;top:0px;height:32px"></div><svg style="left:64px;top:12px" width="12" height="8" viewBox="0 0 12 8"><path d="M0 0H12L6 7.6Z" fill="#5b4545"/></svg><svg style="left:80px;top:7.9px" width="16" height="16"><use href="#ball" width="16" height="16"/></svg><div class="row" style="top:0px"><span class="g" style="left:103px;width:98px"><i style="letter-spacing:0.142px">function </i></span><span class="c" style="left:201px;width:303px"><i style="letter-spacing:0.003px">SetCameraAtPlayerPosition</i></span><span class="g" style="left:504px;width:7px"><i style="letter-spacing:0.250px"> </i></span></div><div class="vl" style="left:49px;top:32px;height:32px"></div><div class="vl" style="left:69px;top:32px;height:32px"></div><svg style="left:84px;top:44px" width="12" height="8" viewBox="0 0 12 8"><path d="M0 0H12L6 7.6Z" fill="#5b4545"/></svg><svg style="left:100px;top:39.9px" width="16" height="16"><use href="#ball" width="16" height="16"/></svg><div class="row" style="top:32px"><span class="b" style="left:123px;width:111px"><i style="letter-spacing:0.081px">Start Here</i></span></div><div class="vl" style="left:49px;top:64px;height:32px"></div><div class="vl" style="left:69px;top:64px;height:32px"></div><div class="vl" style="left:89px;top:64px;height:32px"></div><svg style="left:104px;top:76px" width="12" height="8" viewBox="0 0 12 8"><path d="M0 0H12L6 7.6Z" fill="#5b4545"/></svg><svg style="left:120px;top:71.9px" width="16" height="16"><use href="#ball" width="16" height="16"/></svg><div class="row" style="top:64px"><span class="g" style="left:143px;width:45px"><i style="letter-spacing:0.188px">For </i></span><span class="c" style="left:188px;width:51px"><i style="letter-spacing:0.253px">t = 1</i></span><span class="g" style="left:239px;width:36px"><i style="letter-spacing:0.375px"> to </i></span><span class="c" style="left:275px;width:204px"><i style="letter-spacing:0.004px">(nRows-nPlayerY)</i></span><span class="g" style="left:479px;width:58px"><i style="letter-spacing:0.169px"> step </i></span><span class="c" style="left:537px;width:14px"><i style="letter-spacing:0.500px">1</i></span></div><div class="vl" style="left:49px;top:96px;height:32px"></div><div class="vl" style="left:69px;top:96px;height:32px"></div><div class="vl" style="left:89px;top:96px;height:32px"></div><svg style="left:124px;top:108px" width="12" height="8" viewBox="0 0 12 8"><path d="M0 0H12L6 7.6Z" fill="#5b4545"/></svg><svg style="left:140px;top:103.9px" width="16" height="16"><use href="#ball" width="16" height="16"/></svg><div class="row" style="top:96px"><span class="b" style="left:163px;width:111px"><i style="letter-spacing:0.081px">Start Here</i></span></div><div class="vl" style="left:49px;top:128px;height:32px"></div><div class="vl" style="left:69px;top:128px;height:32px"></div><div class="vl" style="left:89px;top:128px;height:32px"></div><div class="vl" style="left:129px;top:128px;height:32px"></div><div class="vl" style="left:149px;top:128px;height:15px"></div><div class="hl" style="left:149px;top:142px;width:11px"></div><svg style="left:160px;top:135.9px" width="16" height="16"><use href="#ball" width="16" height="16"/></svg><div class="row" style="top:128px"><span class="g" style="left:183px;width:328px"><i style="letter-spacing:-0.135px">oGameCamera.FastmoveUp( )</i></span></div><div class="vl" style="left:49px;top:160px;height:32px"></div><div class="vl" style="left:69px;top:160px;height:32px"></div><div class="vl" style="left:89px;top:160px;height:32px"></div><div class="vl" style="left:129px;top:160px;height:15px"></div><div class="hl" style="left:129px;top:174px;width:11px"></div><svg style="left:140px;top:167.9px" width="16" height="16"><use href="#ball" width="16" height="16"/></svg><div class="row" style="top:160px"><span class="o" style="left:163px;width:184px"><i style="letter-spacing:0.218px">End of For Loop</i></span></div><div class="vl" style="left:49px;top:192px;height:32px"></div><div class="vl" style="left:69px;top:192px;height:32px"></div><div class="vl" style="left:89px;top:192px;height:15px"></div><div class="hl" style="left:89px;top:206px;width:11px"></div><svg style="left:100px;top:199.9px" width="16" height="16"><use href="#ball" width="16" height="16"/></svg><div class="row" style="top:192px"><span class="o" style="left:123px;width:179px"><i style="letter-spacing:0.234px">End of Function</i></span></div><div class="vl" style="left:49px;top:224px;height:32px"></div><svg style="left:64px;top:236px" width="12" height="8" viewBox="0 0 12 8"><path d="M0 0H12L6 7.6Z" fill="#5b4545"/></svg><svg style="left:80px;top:231.9px" width="16" height="16"><use href="#ball" width="16" height="16"/></svg><div class="row" style="top:224px"><span class="g" style="left:103px;width:98px"><i style="letter-spacing:0.142px">function </i></span><span class="c" style="left:201px;width:99px"><i style="letter-spacing:0.005px">nextlevel</i></span><span class="g" style="left:300px;width:7px"><i style="letter-spacing:0.250px"> </i></span></div><div class="vl" style="left:49px;top:256px;height:32px"></div><div class="vl" style="left:69px;top:256px;height:32px"></div><svg style="left:84px;top:268px" width="12" height="8" viewBox="0 0 12 8"><path d="M0 0H12L6 7.6Z" fill="#5b4545"/></svg><svg style="left:100px;top:263.9px" width="16" height="16"><use href="#ball" width="16" height="16"/></svg><div class="row" style="top:256px"><span class="b" style="left:123px;width:111px"><i style="letter-spacing:0.081px">Start Here</i></span></div><div class="vl" style="left:49px;top:288px;height:32px"></div><div class="vl" style="left:69px;top:288px;height:32px"></div><div class="vl" style="left:89px;top:288px;height:32px"></div><div class="vl" style="left:109px;top:288px;height:32px"></div><div class="hs" style="left:111px;top:301px;width:9px"></div><svg style="left:120px;top:295.9px" width="16" height="16"><use href="#ball" width="16" height="16"/></svg><div class="row" style="top:288px"><span class="c" style="left:143px;width:104px"><i style="letter-spacing:-0.180px">nLevel++</i></span></div><div class="vl" style="left:49px;top:320px;height:32px"></div><div class="vl" style="left:69px;top:320px;height:32px"></div><div class="vl" style="left:89px;top:320px;height:32px"></div><div class="vl" style="left:109px;top:320px;height:32px"></div><div class="hs" style="left:111px;top:333px;width:9px"></div><svg style="left:120px;top:327.9px" width="16" height="16"><use href="#ball" width="16" height="16"/></svg><div class="row" style="top:320px"><span class="g" style="left:143px;width:118px"><i style="letter-spacing:0.098px">loadlevel()</i></span></div><div class="vl" style="left:49px;top:352px;height:32px"></div><div class="vl" style="left:69px;top:352px;height:32px"></div><div class="vl" style="left:89px;top:352px;height:32px"></div><div class="vl" style="left:109px;top:352px;height:32px"></div><div class="hs" style="left:111px;top:365px;width:9px"></div><svg style="left:120px;top:359.9px" width="16" height="16"><use href="#ball" width="16" height="16"/></svg><div class="row" style="top:352px"><span class="g" style="left:143px;width:210px"><i style="letter-spacing:-0.076px">DefaultLevelData()</i></span></div><div class="vl" style="left:49px;top:384px;height:32px"></div><div class="vl" style="left:69px;top:384px;height:32px"></div><div class="vl" style="left:89px;top:384px;height:32px"></div><div class="vl" style="left:109px;top:384px;height:32px"></div><div class="hs" style="left:111px;top:397px;width:9px"></div><svg style="left:120px;top:391.9px" width="16" height="16"><use href="#ball" width="16" height="16"/></svg><div class="row" style="top:384px"><span class="g" style="left:143px;width:407px"><i style="letter-spacing:-0.071px">oGameCamera.DefaultCameraData( )</i></span></div><div class="vl" style="left:49px;top:416px;height:32px"></div><div class="vl" style="left:69px;top:416px;height:32px"></div><div class="vl" style="left:89px;top:416px;height:32px"></div><div class="vl" style="left:109px;top:416px;height:15px"></div><div class="hl" style="left:109px;top:430px;width:11px"></div><svg style="left:120px;top:423.9px" width="16" height="16"><use href="#ball" width="16" height="16"/></svg><div class="row" style="top:416px"><span class="g" style="left:143px;width:321px"><i style="letter-spacing:0.003px">SetCameraAtPlayerPosition()</i></span></div><div class="vl" style="left:49px;top:448px;height:32px"></div><div class="vl" style="left:69px;top:448px;height:32px"></div><div class="vl" style="left:89px;top:448px;height:15px"></div><div class="hl" style="left:89px;top:462px;width:11px"></div><svg style="left:100px;top:455.9px" width="16" height="16"><use href="#ball" width="16" height="16"/></svg><div class="row" style="top:448px"><span class="o" style="left:123px;width:179px"><i style="letter-spacing:0.234px">End of Function</i></span></div><div class="vl" style="left:49px;top:480px;height:32px"></div><svg style="left:64px;top:492px" width="12" height="8" viewBox="0 0 12 8"><path d="M0 0H12L6 7.6Z" fill="#5b4545"/></svg><svg style="left:80px;top:487.9px" width="16" height="16"><use href="#ball" width="16" height="16"/></svg><div class="row" style="top:480px"><span class="g" style="left:103px;width:98px"><i style="letter-spacing:0.142px">function </i></span><span class="c" style="left:201px;width:120px"><i style="letter-spacing:0.008px">restartlevel</i></span><span class="g" style="left:321px;width:7px"><i style="letter-spacing:0.250px"> </i></span></div></div>
<div class="a" style="left:5px;top:692px;width:678px;height:1px;background:#d4d4d4"></div>
<div class="a" style="left:689px;top:692px;width:677px;height:1px;background:#d4d4d4"></div>
<div class="a" style="left:5px;top:692px;width:127px;height:21px;box-sizing:border-box;border:1px solid #b4b4b4;border-radius:0 0 3px 3px;background:#e1e1e1"></div>
<div class="t" style="left:16px;top:695px;font-size:11px;letter-spacing:0.08px">gamehowtoplay.pwct</div>
<div class="a" style="left:132px;top:692px;width:112px;height:23px;box-sizing:border-box;border:1px solid #adadad;border-top:none;border-radius:0 0 3px 3px;background:#f7f7f7"></div>
<div class="t" style="left:143px;top:696px;font-size:11px">gamecamera.pwct</div>
<div class="a" style="left:689px;top:692px;width:94px;height:21px;box-sizing:border-box;border:1px solid #b4b4b4;border-radius:0 0 3px 3px;background:#e1e1e1"></div>
<div class="t" style="left:700px;top:695px;font-size:11px;letter-spacing:-0.27px">Form Designer</div>
<div class="a" style="left:782px;top:692px;width:98px;height:23px;box-sizing:border-box;border:1px solid #adadad;border-top:none;border-radius:0 0 3px 3px;background:#f7f7f7"></div>
<div class="t" style="left:793px;top:696px;font-size:11px">gamelevel.pwct</div>
</body></html>
